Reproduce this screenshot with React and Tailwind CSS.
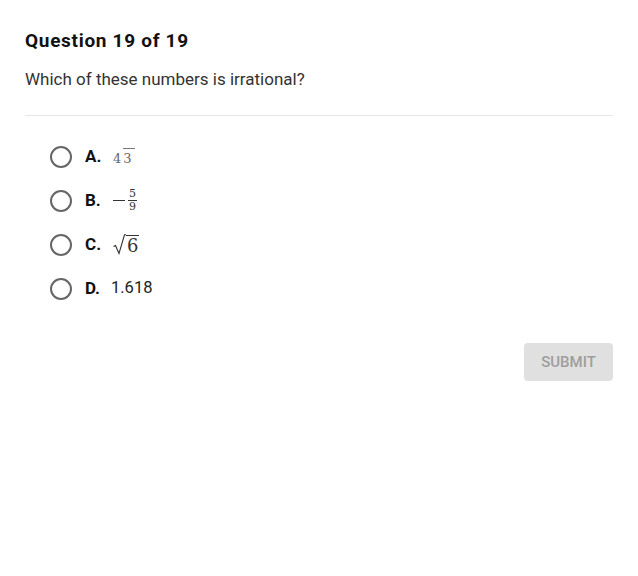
export default function App() {
  const options = [
    {
      key: 'A',
      content: (
        <span className="flex items-end font-['DejaVu_Serif',serif] text-[13px] leading-none text-[#666]">
          <span>4</span>
          <span className="ml-[2px] border-t border-[#777] pt-[3px] pr-[3px]">3</span>
        </span>
      ),
    },
    {
      key: 'B',
      content: (
        <span className="flex items-center font-['DejaVu_Serif',serif] text-[#333]">
          <span className="mr-[3px] block h-[1px] w-[12px] bg-[#333]"></span>
          <span className="flex flex-col items-center text-[11px] leading-[12px]">
            <span className="px-[1px]">5</span>
            <span className="block w-full border-t border-[#333]"></span>
            <span className="px-[1px]">9</span>
          </span>
        </span>
      ),
    },
    {
      key: 'C',
      content: (
        <span className="flex items-end text-[#333]">
          <svg width="13" height="21" viewBox="0 0 13 21" className="block">
            <path d="M0.5 12.5 L2.5 11.5 L6 19.5 L11.5 0.8 L13 0.8" fill="none" stroke="#333" strokeWidth="1.1" />
          </svg>
          <span className="border-t border-[#333] pl-[1px] pr-[1px] font-['DejaVu_Serif',serif] text-[18px] leading-[19px]">6</span>
        </span>
      ),
    },
    {
      key: 'D',
      content: <span className="-ml-[2px] text-[16.5px] text-[#222]">1.618</span>,
    },
  ];

  return (
    <div className="min-h-[576px] w-[638px] bg-white font-['Roboto',sans-serif] text-[#212121]">
      <div className="px-[25px] pt-[29px]">
        <h1 className="text-[19px] font-bold leading-[24px] tracking-[0.7px] text-[#111]">Question 19 of 19</h1>
        <p className="mt-[15px] text-[17px] leading-[22px] text-[#333]">Which of these numbers is irrational?</p>
        <div className="mt-[25px] border-t border-[#e6e6e6]"></div>

        <div className="mt-[28px] flex flex-col gap-[19px] pl-[25px]">
          {options.map((o) => (
            <div key={o.key} className="flex h-[25px] items-center">
              <span className="h-[22px] w-[22px] rounded-full border-2 border-[#666]"></span>
              <span className="ml-[13px] w-[28px] text-[17px] font-bold text-[#111]">{o.key}.</span>
              {o.content}
            </div>
          ))}
        </div>

        <div className="mt-[42px] flex justify-end">
          <button className="h-[38px] w-[89px] rounded-[4px] bg-[#e0e0e0] text-[15px] font-medium text-[#9e9e9e]">
            SUBMIT
          </button>
        </div>
      </div>
    </div>
  );
}
